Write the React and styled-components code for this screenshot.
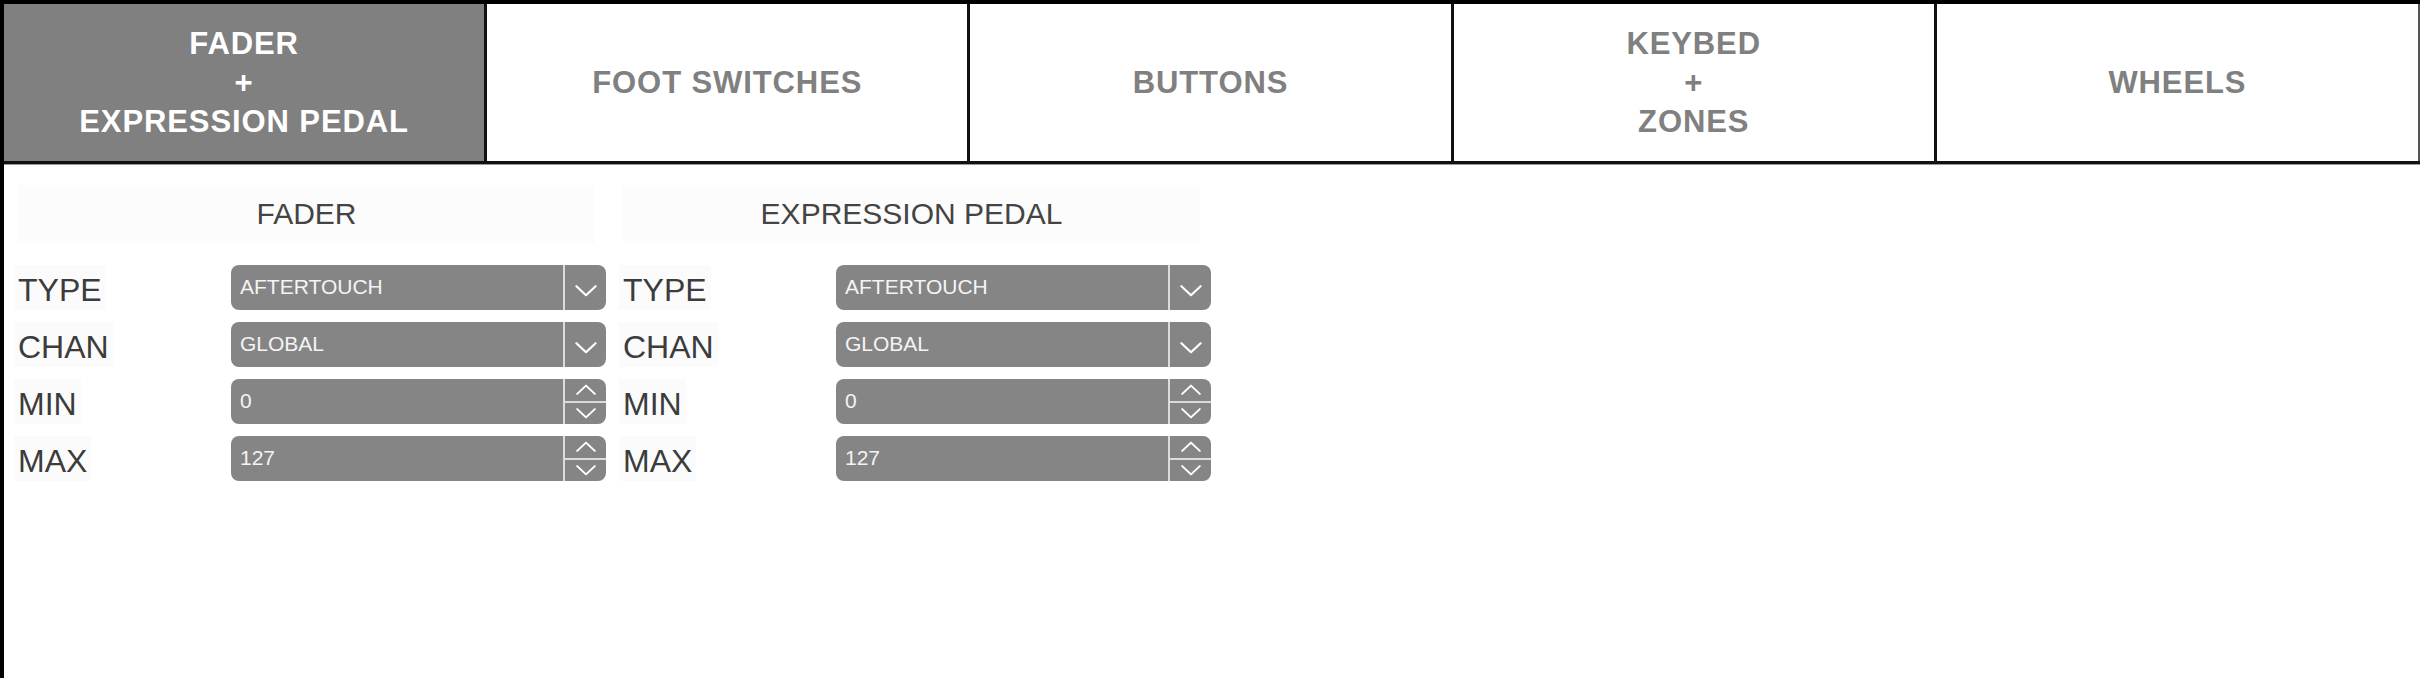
import styled, { createGlobalStyle } from 'styled-components';

const GlobalStyle = createGlobalStyle`
  html, body {
    margin: 0;
    padding: 0;
    background: #ffffff;
  }
  body {
    font-family: "Liberation Sans", Arial, sans-serif;
  }
`;

const tabs = [
  { id: 'fader', lines: ['FADER', '+', 'EXPRESSION PEDAL'] },
  { id: 'foot', lines: ['FOOT SWITCHES'] },
  { id: 'buttons', lines: ['BUTTONS'] },
  { id: 'keybed', lines: ['KEYBED', '+', 'ZONES'] },
  { id: 'wheels', lines: ['WHEELS'] },
];

const sections = [
  {
    title: 'FADER',
    rows: [
      { label: 'TYPE', value: 'AFTERTOUCH', kind: 'select' },
      { label: 'CHAN', value: 'GLOBAL', kind: 'select' },
      { label: 'MIN', value: '0', kind: 'number' },
      { label: 'MAX', value: '127', kind: 'number' },
    ],
  },
  {
    title: 'EXPRESSION PEDAL',
    rows: [
      { label: 'TYPE', value: 'AFTERTOUCH', kind: 'select' },
      { label: 'CHAN', value: 'GLOBAL', kind: 'select' },
      { label: 'MIN', value: '0', kind: 'number' },
      { label: 'MAX', value: '127', kind: 'number' },
    ],
  },
];

const Chevron = ({ up, w = 18, h = 10 }) => (
  <svg width={w} height={h} viewBox="0 0 18 10">
    <polyline
      points={up ? '1,9 9,1.5 17,9' : '1,1 9,8.5 17,1'}
      fill="none"
      stroke="#ffffff"
      strokeWidth="1.8"
      strokeLinecap="round"
      strokeLinejoin="round"
    />
  </svg>
);

const Field = ({ value, kind }) => (
  <FieldBox>
    <FieldValue>{value}</FieldValue>
    {kind === 'select' ? (
      <FieldButton>
        <DropIcon>
          <Chevron w={22} h={12} />
        </DropIcon>
      </FieldButton>
    ) : (
      <Spinner>
        <SpinHalf>
          <Chevron up w={20} h={11} />
        </SpinHalf>
        <SpinHalf $bottom>
          <Chevron w={20} h={11} />
        </SpinHalf>
      </Spinner>
    )}
  </FieldBox>
);

const App = () => {
  return (
    <Page>
      <GlobalStyle />
      <TabBar>
        {tabs.map((t, i) => (
          <Tab key={t.id} $active={i === 0} $last={i === tabs.length - 1}>
            {t.lines.map((l, j) => (
              <TabLine key={j}>{l}</TabLine>
            ))}
          </Tab>
        ))}
      </TabBar>

      <Content>
        {sections.map((s) => (
          <Section key={s.title}>
            <SectionTitle>{s.title}</SectionTitle>
            <Rows>
              {s.rows.map((r) => (
                <Row key={r.label}>
                  <Label>{r.label}</Label>
                  <Field value={r.value} kind={r.kind} />
                </Row>
              ))}
            </Rows>
          </Section>
        ))}
      </Content>
    </Page>
  );
};

export default App;

const Page = styled.div`
  width: 2420px;
  height: 678px;
  box-sizing: border-box;
  border-left: 4px solid #000;
  background: #fff;
  overflow: hidden;
`;

const TabBar = styled.div`
  display: grid;
  grid-template-columns: repeat(5, 1fr);
  height: 164px;
  box-sizing: border-box;
  border-top: 4px solid #000;
  border-bottom: 3px solid #111;
  box-shadow: 0 1px 0 #9a9a9a;
`;

const Tab = styled.div`
  display: flex;
  flex-direction: column;
  align-items: center;
  justify-content: center;
  box-sizing: border-box;
  border-right: ${({ $last }) => ($last ? '2px solid #555' : '3px solid #111')};
  background: ${({ $active }) => ($active ? '#808080' : '#ffffff')};
  color: ${({ $active }) => ($active ? '#ffffff' : '#808080')};
  font-weight: 700;
  font-size: 31px;
  letter-spacing: 0.9px;
  cursor: pointer;
`;

const TabLine = styled.div`
  line-height: 39px;
`;

const Content = styled.div`
  display: grid;
  grid-template-columns: 605px 605px;
  padding-top: 21px;
`;

const Section = styled.div`
  display: flex;
  flex-direction: column;
`;

const SectionTitle = styled.div`
  height: 58px;
  margin: 0 14px;
  display: flex;
  align-items: center;
  justify-content: center;
  background: #fcfcfc;
  color: #444;
  font-size: 30px;
`;

const Rows = styled.div`
  display: flex;
  flex-direction: column;
  gap: 12px;
  margin-top: 22px;
`;

const Row = styled.div`
  display: grid;
  grid-template-columns: 227px 375px;
  height: 45px;
  align-items: center;
`;

const Label = styled.div`
  justify-self: start;
  margin-left: 10px;
  padding: 0 4px;
  height: 45px;
  line-height: 50px;
  background: #fbfbfb;
  color: #3c3c3c;
  font-size: 32px;
`;

const FieldBox = styled.div`
  display: flex;
  height: 45px;
  border-radius: 8px;
  background: #858585;
  overflow: hidden;
`;

const FieldValue = styled.div`
  flex: 1;
  padding-left: 9px;
  padding-top: 10px;
  color: #f4f4f4;
  font-size: 21px;
`;

const FieldButton = styled.div`
  width: 41px;
  border-left: 2px solid #dcdcdc;
  display: flex;
  align-items: center;
  justify-content: center;
`;

const DropIcon = styled.div`
  display: flex;
  margin-top: 6px;
`;

const Spinner = styled.div`
  width: 41px;
  border-left: 2px solid #dcdcdc;
  display: flex;
  flex-direction: column;
`;

const SpinHalf = styled.div`
  flex: 1;
  display: flex;
  align-items: center;
  justify-content: center;
  border-top: ${({ $bottom }) => ($bottom ? '2px solid #dcdcdc' : 'none')};
`;
